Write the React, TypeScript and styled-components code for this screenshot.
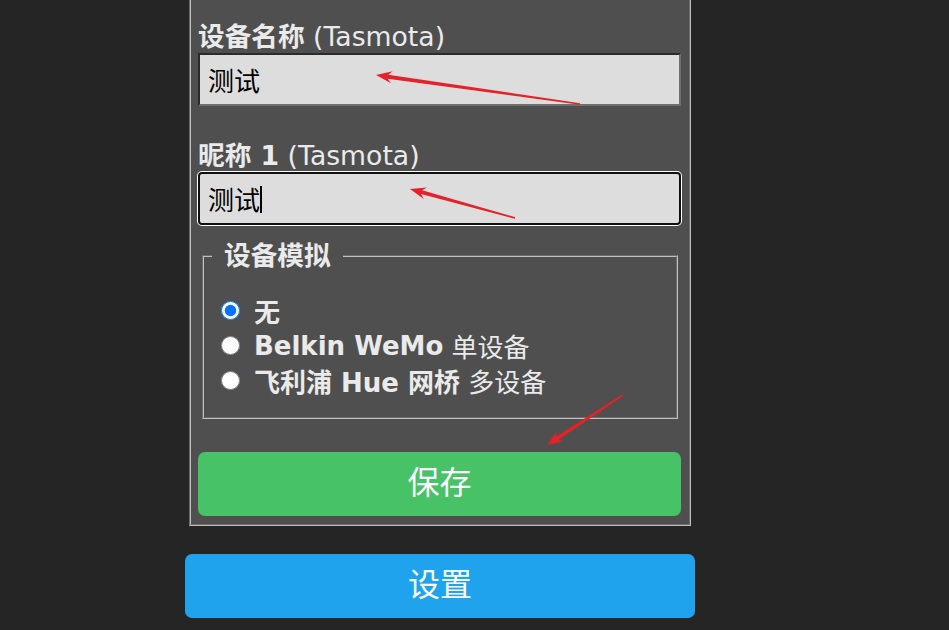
import React from "react";
import styled, { createGlobalStyle, css } from "styled-components";

const GlobalStyle = createGlobalStyle`
  html, body {
    margin: 0;
    padding: 0;
    background: #252525;
  }
  body {
    font-family: "DejaVu Sans", "Noto Sans CJK SC", sans-serif;
    color: #eaeaea;
    overflow: hidden;
  }
`;

const Root = styled.div`
  position: relative;
  width: 949px;
  height: 630px;
  overflow: hidden;
`;

const Column = styled.div`
  width: 510px;
  margin-left: 185px;
  display: flex;
  flex-direction: column;
`;

const Panel = styled.div`
  margin: 0 4px;
  background: #4f4f4f;
  border: 2px groove #c0c0c0;
  border-top: none;
  padding: 0 8px 8px 7px;
  display: flex;
  flex-direction: column;
`;

const Field = styled.div<{ $top: number }>`
  margin-top: ${(p) => p.$top}px;
  display: flex;
  flex-direction: column;
`;

const Label = styled.label`
  font-size: 26.67px;
  line-height: 32px;
  white-space: nowrap;
  b {
    font-weight: 700;
  }
`;

const InputWrap = styled.div`
  position: relative;
`;

const TextInput = styled.input<{ $focused?: boolean }>`
  box-sizing: border-box;
  display: block;
  width: 100%;
  height: 53px;
  margin: 0;
  padding: 0 8px;
  font-family: "DejaVu Sans", "Noto Sans CJK SC", sans-serif;
  font-size: 26px;
  color: #000;
  background: #dddddd;
  border: 2px solid;
  border-color: #2b2b2b #6f6f6f #6f6f6f #2b2b2b;
  outline: none;
  ${(p) =>
    p.$focused &&
    css`
      border-color: #101010;
      border-radius: 4px;
      box-shadow: 0 0 0 1px #ffffff;
    `}
`;

const Caret = styled.span`
  position: absolute;
  left: 62px;
  top: 14px;
  width: 1.5px;
  height: 27px;
  background: #000;
`;

const Group = styled.fieldset`
  margin: 15px 3px 0 4px;
  padding: 0 8px 19px 8px;
  border: 2px groove #c0c0c0;
  min-width: 0;
`;

const Legend = styled.legend`
  padding: 0 12px;
  font-weight: 700;
  font-size: 26.67px;
  line-height: 32px;
`;

const RadioList = styled.div`
  margin-top: 21px;
  display: flex;
  flex-direction: column;
`;

const Row = styled.label`
  height: 35px;
  display: flex;
  align-items: center;
  font-size: 26px;
  white-space: nowrap;
  b {
    font-weight: 700;
  }
`;

const Radio = styled.input`
  width: 19px;
  height: 19px;
  margin: 0 14px 0 9px;
  flex: none;
`;

const Button = styled.button<{ $variant: "green" | "blue"; $top: number }>`
  display: block;
  width: 100%;
  height: 64px;
  margin-top: ${(p) => p.$top}px;
  padding: 0 0 8px;
  border: 0;
  border-radius: 7px;
  color: #faffff;
  font-family: "DejaVu Sans", "Noto Sans CJK SC", sans-serif;
  font-size: 32px;
  background: ${(p) => (p.$variant === "green" ? "#47c266" : "#1fa3ec")};
  cursor: pointer;
`;

const Overlay = styled.svg`
  position: absolute;
  top: 0;
  left: 0;
  pointer-events: none;
`;

type Pt = [number, number];

function arrowPoints(tail: Pt, tip: Pt): string {
  const [x1, y1] = tail;
  const [x2, y2] = tip;
  const dx = x2 - x1;
  const dy = y2 - y1;
  const len = Math.hypot(dx, dy);
  const ux = dx / len;
  const uy = dy / len;
  const nx = -uy;
  const ny = ux;
  const headLen = 16;
  const headHalf = 6;
  const notch = 4;
  const shaftTail = 0.8;
  const shaftHead = 2;
  const bx = x2 - ux * headLen;
  const by = y2 - uy * headLen;
  const nbx = bx + ux * notch;
  const nby = by + uy * notch;
  const pts: Pt[] = [
    [x1 + nx * shaftTail, y1 + ny * shaftTail],
    [nbx + nx * shaftHead, nby + ny * shaftHead],
    [bx + nx * headHalf, by + ny * headHalf],
    [x2, y2],
    [bx - nx * headHalf, by - ny * headHalf],
    [nbx - nx * shaftHead, nby - ny * shaftHead],
    [x1 - nx * shaftTail, y1 - ny * shaftTail],
  ];
  return pts.map((p) => `${p[0].toFixed(1)},${p[1].toFixed(1)}`).join(" ");
}

const arrows: { tail: Pt; tip: Pt }[] = [
  { tail: [580, 104], tip: [376, 75] },
  { tail: [515, 218], tip: [410, 189] },
  { tail: [623, 395], tip: [547, 445] },
];

export default function App() {
  return (
    <Root>
      <GlobalStyle />
      <Column>
        <Panel>
          <Field $top={21}>
            <Label>
              <b>设备名称</b> (Tasmota)
            </Label>
            <TextInput type="text" defaultValue="测试" readOnly />
          </Field>
          <Field $top={34}>
            <Label>
              <b>昵称 1</b> (Tasmota)
            </Label>
            <InputWrap>
              <TextInput type="text" defaultValue="测试" readOnly $focused />
              <Caret />
            </InputWrap>
          </Field>
          <Group>
            <Legend>设备模拟</Legend>
            <RadioList>
              <Row>
                <Radio type="radio" name="emu" defaultChecked />
                <b>无</b>
              </Row>
              <Row>
                <Radio type="radio" name="emu" />
                <b>Belkin WeMo</b>&nbsp;单设备
              </Row>
              <Row>
                <Radio type="radio" name="emu" />
                <b>飞利浦 Hue 网桥</b>&nbsp;多设备
              </Row>
            </RadioList>
          </Group>
          <Button $variant="green" $top={33}>
            保存
          </Button>
        </Panel>
        <Button $variant="blue" $top={28}>
          设置
        </Button>
      </Column>
      <Overlay width={949} height={630} viewBox="0 0 949 630">
        {arrows.map((a, i) => (
          <polygon key={i} points={arrowPoints(a.tail, a.tip)} fill="#e52129" />
        ))}
      </Overlay>
    </Root>
  );
}
